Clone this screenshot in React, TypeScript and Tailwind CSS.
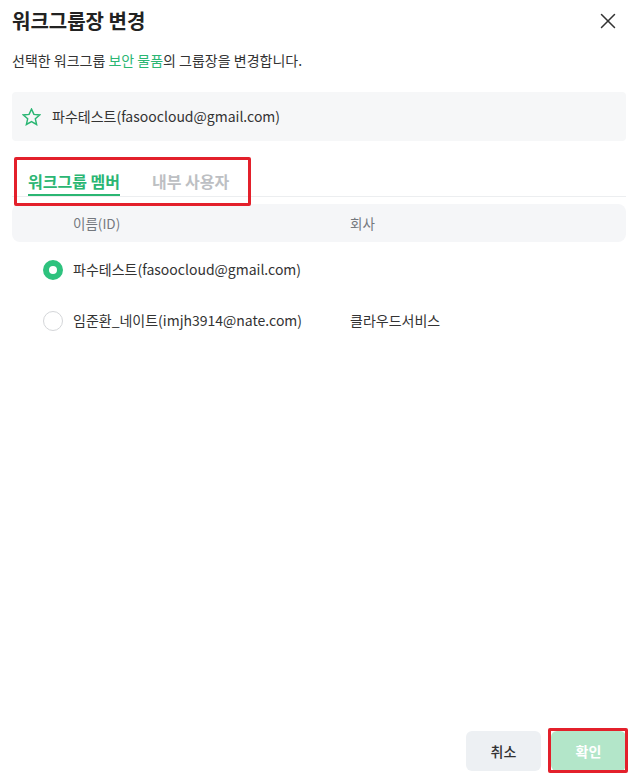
import { useState } from "react";

type Member = { id: string; name: string; company: string };

const members: Member[] = [
  { id: "fasoocloud@gmail.com", name: "파수테스트", company: "" },
  { id: "imjh3914@nate.com", name: "임준환_네이트", company: "클라우드서비스" },
];

const StarIcon = () => (
  <svg width="19" height="18" viewBox="0 0 24 23" fill="none" stroke="#2bb673" strokeWidth="1.9" strokeLinejoin="miter">
    <polygon points="12,1.5 15.1,8.2 22.4,8.9 16.9,13.8 18.5,21 12,17.3 5.5,21 7.1,13.8 1.6,8.9 8.9,8.2" />
  </svg>
);

const CloseIcon = () => (
  <svg width="16" height="16" viewBox="0 0 16 16" stroke="#333" strokeWidth="1.5" strokeLinecap="round">
    <line x1="1.5" y1="1.5" x2="14.5" y2="14.5" />
    <line x1="14.5" y1="1.5" x2="1.5" y2="14.5" />
  </svg>
);

const App = () => {
  const [tab, setTab] = useState<"members" | "internal">("members");
  const [selected, setSelected] = useState(members[0].id);

  return (
    <div className="relative flex min-h-[779px] w-[641px] flex-col bg-white pl-3 pr-[15px] font-['Noto_Sans_CJK_KR','Noto_Sans',sans-serif] text-[#333]">
      {/* header */}
      <div className="flex items-center justify-between pt-[7px]">
        <h1 className="text-[20px] font-bold leading-[28px] text-[#222]">워크그룹장 변경</h1>
        <button className="mr-[8px] flex h-[20px] w-[20px] items-center justify-center">
          <CloseIcon />
        </button>
      </div>

      <p className="mt-[15px] text-[14px] leading-[20px] text-[#333]">
        선택한 워크그룹 <span className="text-[#2bb673]">보안 물품</span>의 그룹장을 변경합니다.
      </p>

      <div className="mt-[22px] flex h-[49px] items-center gap-[11px] rounded bg-[#f6f7f8] pl-[10px]">
        <StarIcon />
        <span className="text-[14px]">파수테스트(fasoocloud@gmail.com)</span>
      </div>

      {/* tabs */}
      <div className="relative mt-[20px] flex gap-[32px] border-b border-[#eceef0] pl-[16px]">
        <button
          onClick={() => setTab("members")}
          className={`border-b-2 pb-[2px] pt-[9px] text-[16px] font-bold leading-[22px] ${
            tab === "members" ? "border-[#2bb673] text-[#2bb673]" : "border-transparent text-[#bdbfc3]"
          }`}
        >
          워크그룹 멤버
        </button>
        <button
          onClick={() => setTab("internal")}
          className={`border-b-2 pb-[2px] pt-[9px] text-[16px] font-bold leading-[22px] ${
            tab === "internal" ? "border-[#2bb673] text-[#2bb673]" : "border-transparent text-[#bdbfc3]"
          }`}
        >
          내부 사용자
        </button>
        <div className="pointer-events-none absolute left-[2px] top-[-4px] h-[49px] w-[237px] rounded-[2px] border-[3px] border-[#e3202b]" />
      </div>

      {/* table */}
      <div className="mt-[7px] flex h-[38px] items-center rounded-lg bg-[#f5f6f8] text-[13.5px] text-[#74787e]">
        <div className="w-[61px]" />
        <div className="w-[277px]">이름(ID)</div>
        <div>회사</div>
      </div>

      <div className="mt-[2px] flex flex-col">
        {members.map((m) => (
          <div key={m.id} className="flex h-[51px] cursor-pointer items-center text-[14px]" onClick={() => setSelected(m.id)}>
            <div className="w-[61px] pl-[31px]">
              <span
                className={`block h-[20px] w-[20px] rounded-full ${
                  selected === m.id ? "border-[6px] border-[#2ec27e]" : "border border-[#d4d6d9]"
                }`}
              />
            </div>
            <div className="w-[277px]">
              {m.name}({m.id})
            </div>
            <div>{m.company}</div>
          </div>
        ))}
      </div>

      {/* footer */}
      <div className="mt-auto flex justify-end gap-[10px] pb-[8px]">
        <button className="h-[40px] w-[75px] rounded-md bg-[#edf0f3] text-[14px] font-medium text-[#333]">취소</button>
        <div className="relative">
          <button disabled className="h-[40px] w-[75px] rounded-md bg-[#b3e6c9] text-[14px] font-bold text-white">
            확인
          </button>
          <div className="pointer-events-none absolute -left-[3px] -top-[3px] h-[45px] w-[80px] rounded-[2px] border-[3px] border-[#e3202b]" />
        </div>
      </div>
    </div>
  );
};

export default App;
